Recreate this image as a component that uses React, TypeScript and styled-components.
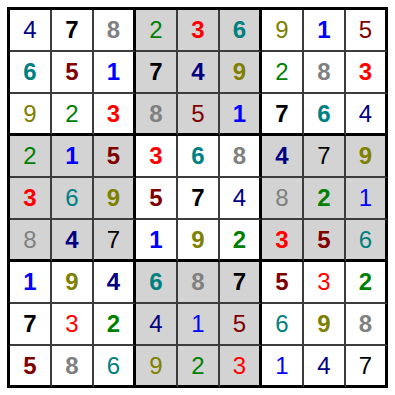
import styled, { createGlobalStyle } from "styled-components";

const GlobalStyle = createGlobalStyle`
    html, body {
        margin: 0;
        padding: 0;
        background: #ffffff;
    }
    body {
        font-family: "Liberation Sans", Arial, sans-serif;
    }
`

const DIGIT_COLORS: Record<number, string> = {
    1: '#0000ff',
    2: '#008000',
    3: '#ff0000',
    4: '#000080',
    5: '#800000',
    6: '#008080',
    7: '#000000',
    8: '#808080',
    9: '#808000',
}

// value:b = given (bold), value:n = filled in by the player
const ROWS = [
    '4:n 7:b 8:b 2:n 3:b 6:b 9:n 1:b 5:n',
    '6:b 5:b 1:b 7:b 4:b 9:b 2:n 8:b 3:b',
    '9:n 2:n 3:b 8:b 5:n 1:b 7:b 6:b 4:n',
    '2:n 1:b 5:b 3:b 6:b 8:b 4:b 7:n 9:b',
    '3:b 6:n 9:b 5:b 7:b 4:n 8:n 2:b 1:n',
    '8:n 4:b 7:n 1:b 9:b 2:b 3:b 5:b 6:n',
    '1:b 9:b 4:b 6:b 8:b 7:b 5:b 3:n 2:b',
    '7:b 3:n 2:b 4:n 1:n 5:n 6:n 9:b 8:b',
    '5:b 8:b 6:n 9:n 2:n 3:n 1:n 4:n 7:n',
].map(r => r.split(' ').map(c => {
    const [v, w] = c.split(':')
    return { value: Number(v), bold: w === 'b' }
}))

export default function App() {
    return (
        <Page>
            <GlobalStyle />
            <Board>
                {ROWS.map((row, r) =>
                    row.map((cell, c) => {
                        const shaded = (Math.floor(r / 3) + Math.floor(c / 3)) % 2 === 1
                        return (
                            <Cell
                                key={`${r}-${c}`}
                                $shaded={shaded}
                                $thickRight={c % 3 === 2}
                                $thickBottom={r % 3 === 2}
                            >
                                <Digit $bold={cell.bold} $color={DIGIT_COLORS[cell.value]}>
                                    {cell.value}
                                </Digit>
                            </Cell>
                        )
                    })
                )}
            </Board>
        </Page>
    )
}

const Page = styled.div`
    width: 395px;
    height: 395px;
    padding: 7px;
    box-sizing: border-box;
    background: #ffffff;
`

const Board = styled.div`
    display: grid;
    grid-template-columns: repeat(9, 42px);
    grid-template-rows: repeat(9, 42px);
    width: max-content;
    border-left: 3px solid #000000;
    border-top: 3px solid #000000;
`

const Cell = styled.div<{ $shaded: boolean; $thickRight: boolean; $thickBottom: boolean }>`
    box-sizing: border-box;
    display: flex;
    align-items: center;
    justify-content: center;
    background: ${p => p.$shaded ? '#d3d3d3' : '#ffffff'};
    border-right: ${p => p.$thickRight ? '3px solid #000000' : '2px solid #3c3c3c'};
    border-bottom: ${p => p.$thickBottom ? '3px solid #000000' : '2px solid #3c3c3c'};
`

const Digit = styled.span<{ $bold: boolean; $color: string }>`
    font-family: "Liberation Sans", Arial, sans-serif;
    font-size: 24px;
    line-height: 1;
    font-weight: ${p => p.$bold ? 700 : 400};
    color: ${p => p.$color};
`
